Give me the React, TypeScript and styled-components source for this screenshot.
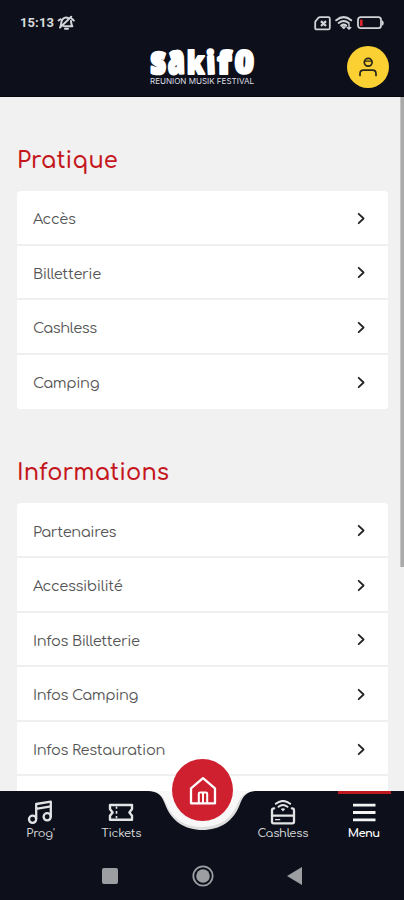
import React from "react";
import styled, { createGlobalStyle } from "styled-components";

const NIGHT = "#0d101b";
const RED = "#c5161d";

const GlobalStyle = createGlobalStyle`
  html, body { margin: 0; padding: 0; background: ${NIGHT}; }
  * { box-sizing: border-box; }
`;

const Screen = styled.div`
  width: 404px;
  height: 900px;
  display: flex;
  flex-direction: column;
  overflow: hidden;
  background: ${NIGHT};
  font-family: Comfortaa, Quicksand, Lato, sans-serif;
`;

const Header = styled.header`
  height: 97px;
  flex: none;
  background: ${NIGHT};
  border-bottom: 1px solid #05060c;
`;

const StatusBar = styled.div`
  height: 46px;
  padding: 0 20px 0 20px;
  display: flex;
  align-items: center;
  justify-content: space-between;
`;

const StatusGroup = styled.div<{ $gap: number }>`
  display: flex;
  align-items: center;
  gap: ${({ $gap }) => $gap}px;
`;

const Clock = styled.span`
  width: 35px;
  font: 700 13px/16px Roboto, sans-serif;
  letter-spacing: 0.1px;
  color: #d9dadd;
`;

const BrandBar = styled.div`
  height: 50px;
  padding: 0 15px;
  display: grid;
  grid-template-columns: 42px 1fr 42px;
`;

const LogoSlot = styled.div`
  grid-column: 2;
  display: flex;
  justify-content: center;
`;

const ProfileButton = styled.button`
  width: 42px;
  height: 42px;
  border: 0;
  border-radius: 50%;
  padding: 0;
  background: #fbd032;
  display: flex;
  align-items: center;
  justify-content: center;
`;

const Viewport = styled.div`
  flex: 1;
  min-height: 0;
  display: flex;
  background: #f1f1f1;
  overflow: hidden;
`;

const Content = styled.main`
  flex: 1;
  padding: 47px 12px 0 17px;
  overflow: hidden;
`;

const ScrollThumb = styled.div`
  width: 4px;
  height: 470px;
  background: #aaaaaa;
  border-left: 1px solid #c4c4c4;
`;

const Section = styled.section`
  margin-bottom: 47px;
`;

const SectionTitle = styled.h2`
  height: 47px;
  margin: 0;
  font-size: 22.5px;
  line-height: 33px;
  font-weight: 600;
  letter-spacing: 0.15px;
  color: ${RED};
  white-space: nowrap;
`;

const Card = styled.div`
  border-radius: 4px;
  overflow: hidden;
  background: #fff;
`;

const Row = styled.div`
  height: 54.6px;
  padding: 2px 22px 0 16px;
  display: flex;
  align-items: center;
  justify-content: space-between;
  border-bottom: 2px solid #efefef;
  &:last-child { border-bottom-color: #fff; }
`;

const RowLabel = styled.span`
  padding-top: 2px;
  font-size: 14.6px;
  line-height: 20px;
  font-weight: 400;
  letter-spacing: -0.35px;
  color: #555555;
  white-space: nowrap;
`;

const Footer = styled.footer`
  position: relative;
  height: 109px;
  flex: none;
  background: ${NIGHT};
`;

const Notch = styled.svg`
  position: absolute;
  left: 148px;
  top: 0;
`;

const HomeButton = styled.button`
  position: absolute;
  left: 172px;
  top: -32px;
  width: 61px;
  height: 62px;
  border: 0;
  padding: 2px 0 0;
  border-radius: 50%;
  background: #cf2030;
  display: flex;
  align-items: center;
  justify-content: center;
`;

const TabBar = styled.nav`
  height: 58px;
  display: grid;
  grid-template-columns: repeat(5, 1fr);
`;

const Tab = styled.div`
  height: 58px;
  display: flex;
  flex-direction: column;
  align-items: center;
  padding-top: 9px;
`;

const ActiveMark = styled.div`
  position: absolute;
  right: 13px;
  top: 0;
  width: 53px;
  height: 3px;
  background: #be171d;
`;

const TabLabel = styled.span<{ $strong?: boolean }>`
  margin-top: 1px;
  font-size: 11.5px;
  line-height: 16px;
  font-weight: ${({ $strong }) => ($strong ? 700 : 500)};
  letter-spacing: ${({ $strong }) => ($strong ? -0.6 : -0.25)}px;
  color: ${({ $strong }) => ($strong ? "#ffffff" : "#d8d9dc")};
  white-space: nowrap;
`;

const SystemBar = styled.div`
  height: 51px;
  padding: 3px 101px 0 102px;
  display: flex;
  align-items: center;
  justify-content: space-between;
`;

const Chevron = () => (
  <svg width="9" height="13" viewBox="0 0 9 13" fill="none">
    <path d="M1.7 1.8 6.6 6.5 1.7 11.2" stroke="#242424" strokeWidth="1.8" strokeLinecap="round" strokeLinejoin="round" />
  </svg>
);

const MutedBell = () => (
  <svg width="18" height="16" viewBox="0 0 18 16" fill="none" stroke="#d4d6db" strokeWidth="2" strokeLinecap="round" strokeLinejoin="round">
    <path d="M3.5 11.2C4.6 9.5 3.8 7.3 5.1 5 6.5 2.5 9.3 2 11.3 3.1M14 6c.3 2 .2 3.8 1.3 5.2H7M1.6 5.5 3.4 4.2M14.8 3.8l2 1.7M3 12.6 14.2 1.8" />
    <path d="M8 13.7h3" />
  </svg>
);

const SimIcon = () => (
  <svg width="17" height="15" viewBox="0 0 17 15" fill="none" stroke="#d2d3d8" strokeWidth="1.8">
    <path d="M6 1.2h8.3q1.5 0 1.5 1.5v9.2q0 1.5-1.5 1.5H2.7q-1.5 0-1.5-1.5V6.4q0-1 .8-1.7l2.3-2.8Q5 1.2 6 1.2Z" />
    <path d="m7 5.2 5 4.8m0-4.8L7 10" strokeWidth="2.3" />
  </svg>
);

const WifiIcon = () => (
  <svg width="18" height="14" viewBox="0 0 18 14" fill="none" stroke="#d2d3d8" strokeWidth="2" strokeLinecap="round">
    <path d="M1.2 4.3Q8.7-2 16.2 4.3M3.7 7q5-4 10 0M6.2 9.6q2.5-2 5 0" />
    <path d="m7 11 1.7 2 1.7-2Z" fill="#d2d3d8" strokeWidth="1" />
    <path d="M14 8v5m-1.7-1.6L14 13l1.8-1.6" strokeWidth="1.4" />
  </svg>
);

const BatteryIcon = () => (
  <svg width="27" height="14" viewBox="0 0 27 14" fill="none">
    <rect x="1" y="1.2" width="23" height="11" rx="2.6" stroke="#d2d3d8" strokeWidth="1.8" />
    <path d="M25 4.5h.5q1.3 1 1.3 2.5t-1.3 2.5H25Z" fill="#d2d3d8" />
    <rect x="3" y="3.6" width="2.6" height="6.4" fill="#d9242d" />
  </svg>
);

const Logo = () => (
  <svg width="108" height="42" viewBox="0 0 108 42" fill="#fff" overflow="visible">
    <g fontFamily="'Noto Sans', sans-serif" fontWeight="900" fontSize="20" stroke="#fff" strokeWidth="1.4" strokeLinejoin="round">
      <text transform="translate(2.3 28) scale(1.55 1.95)">s</text>
      <text transform="translate(20 28) scale(1.38 2) rotate(-2)">a</text>
      <text transform="translate(38.7 28) scale(1.34 1.58)">k</text>
      <text transform="translate(58.8 28) scale(1.4 1.57) rotate(-3)">i</text>
      <text transform="translate(69.2 28) scale(1.7 1.57)">f</text>
      <text transform="translate(86.3 27) scale(1.65 1.6) rotate(2)">0</text>
    </g>
    <text x="2" y="37.8" textLength="104" lengthAdjust="spacingAndGlyphs" fontFamily="Inter, sans-serif" fontSize="7.8" fill="#dcdde0">
      REUNION MUSIK FESTIVAL
    </text>
  </svg>
);

const ProfileIcon = () => (
  <svg width="20" height="22" viewBox="0 0 20 22" fill="none" stroke="#29251b" strokeWidth="1.7" strokeLinecap="round">
    <circle cx="10.2" cy="6.3" r="3.9" />
    <path d="M6.6 5.2h7.2" strokeWidth="1.2" />
    <path d="M2 19.5v-1.8q0-3.5 3.5-3.5h9q3.5 0 3.5 3.5v1.8" />
  </svg>
);

const HomeIcon = () => (
  <svg width="28" height="30" viewBox="0 0 28 30" fill="none" stroke="#fff" strokeWidth="2.3" strokeLinejoin="round">
    <path d="M2 12.3 14 2.2l12 10.1v15H2Z" />
    <path d="M9.8 27v-9.3q0-1.2 1.2-1.2h6q1.2 0 1.2 1.2V27M14 17v10" strokeWidth="2" />
  </svg>
);

const MusicIcon = () => (
  <svg width="26" height="25" viewBox="0 0 26 25" fill="none" stroke="#e3e3e6" strokeWidth="2.3" strokeLinejoin="round">
    <circle cx="5.6" cy="19.3" r="3.6" />
    <circle cx="20.2" cy="16.8" r="3.6" />
    <path d="M9.2 19V4L23.8 1.6V17M9.2 8.8l14.6-2.4" />
  </svg>
);

const TicketIcon = () => (
  <svg width="26" height="25" viewBox="0 0 26 25" fill="none" stroke="#e3e3e6" strokeWidth="2.4" strokeLinejoin="round">
    <path d="M2 5h22v4l-2.6 3.4 2.6 3.4v4H2v-4l2.6-3.4L2 9Z" />
    <path d="M8.5 6.5v2.3m0 2.2v2.8m0 2.2v2.3" strokeWidth="1.6" />
  </svg>
);

const CashlessIcon = () => (
  <svg width="26" height="25" viewBox="0 0 26 25" fill="none" stroke="#e3e3e6" strokeWidth="2.3" strokeLinecap="round" strokeLinejoin="round">
    <path d="M4.2 8.3H4q-2 0-2 2v11.4q0 1.6 1.6 1.6h18.8q1.6 0 1.6-1.6V10.3q0-2-2-2h-.2M2.5 15.6h21" />
    <path d="M5.8 3.8Q13-2 20.2 3.8M8.5 6.8q4.5-3.6 9 0" strokeWidth="1.9" />
    <path d="m10.8 9 2.2 2.4L15.2 9q-2.2-1.5-4.4 0Z" fill="#e3e3e6" stroke="none" />
    <path d="M5.5 19.7h4.2" strokeWidth="1.2" />
  </svg>
);

const MenuIcon = () => (
  <svg width="26" height="25" viewBox="0 0 26 25" stroke="#f4f4f5" strokeWidth="2.8">
    <path d="M2 5.2h22.5M2 12.5h22.5M2 19.8h22.5" />
  </svg>
);

const sections = [
  { title: "Pratique", rows: ["Accès", "Billetterie", "Cashless", "Camping"] },
  {
    title: "Informations",
    rows: ["Partenaires", "Accessibilité", "Infos Billetterie", "Infos Camping", "Infos Restauration", ""],
  },
];

export default function App() {
  return (
    <Screen>
      <GlobalStyle />
      <Header>
        <StatusBar>
          <StatusGroup $gap={2}>
            <Clock>15:13</Clock>
            <MutedBell />
          </StatusGroup>
          <StatusGroup $gap={4}>
            <SimIcon />
            <WifiIcon />
            <BatteryIcon />
          </StatusGroup>
        </StatusBar>
        <BrandBar>
          <LogoSlot><Logo /></LogoSlot>
          <ProfileButton aria-label="Profil"><ProfileIcon /></ProfileButton>
        </BrandBar>
      </Header>
      <Viewport>
        <Content>
          {sections.map((section) => (
            <Section key={section.title}>
              <SectionTitle>{section.title}</SectionTitle>
              <Card>
                {section.rows.map((label, index) => (
                  <Row key={index}>
                    <RowLabel>{label}</RowLabel>
                    {label && <Chevron />}
                  </Row>
                ))}
              </Card>
            </Section>
          ))}
        </Content>
        <ScrollThumb />
      </Viewport>
      <Footer>
        <Notch width="109" height="40" viewBox="0 0 109 40">
          <path d="M0 0C10 0 14 5 17 13 23 30 37 39 54.5 39S86 30 92 13C95 5 99 0 109 0Z" fill="#dedede" />
          <path d="M2 0C11 0 15 5 18 12 24 28 37 36 54.5 36S84 27 90 12C93 5 98 0 107 0Z" fill="#f8f8f8" />
        </Notch>
        <TabBar>
          <Tab><MusicIcon /><TabLabel>Prog'</TabLabel></Tab>
          <Tab><TicketIcon /><TabLabel>Tickets</TabLabel></Tab>
          <Tab />
          <Tab><CashlessIcon /><TabLabel>Cashless</TabLabel></Tab>
          <Tab><MenuIcon /><TabLabel $strong>Menu</TabLabel></Tab>
        </TabBar>
        <ActiveMark />
        <HomeButton aria-label="Accueil"><HomeIcon /></HomeButton>
        <SystemBar>
          <svg width="16" height="16"><rect width="16" height="16" rx="2" fill="#9d9ea2" /></svg>
          <svg width="22" height="22" viewBox="0 0 22 22">
            <circle cx="11" cy="11" r="9.7" fill="none" stroke="#9d9ea2" strokeWidth="1.8" />
            <circle cx="11" cy="11" r="6.8" fill="#9d9ea2" />
          </svg>
          <svg width="16" height="18"><path d="M0 9 15 0v18Z" fill="#9d9ea2" /></svg>
        </SystemBar>
      </Footer>
    </Screen>
  );
}
